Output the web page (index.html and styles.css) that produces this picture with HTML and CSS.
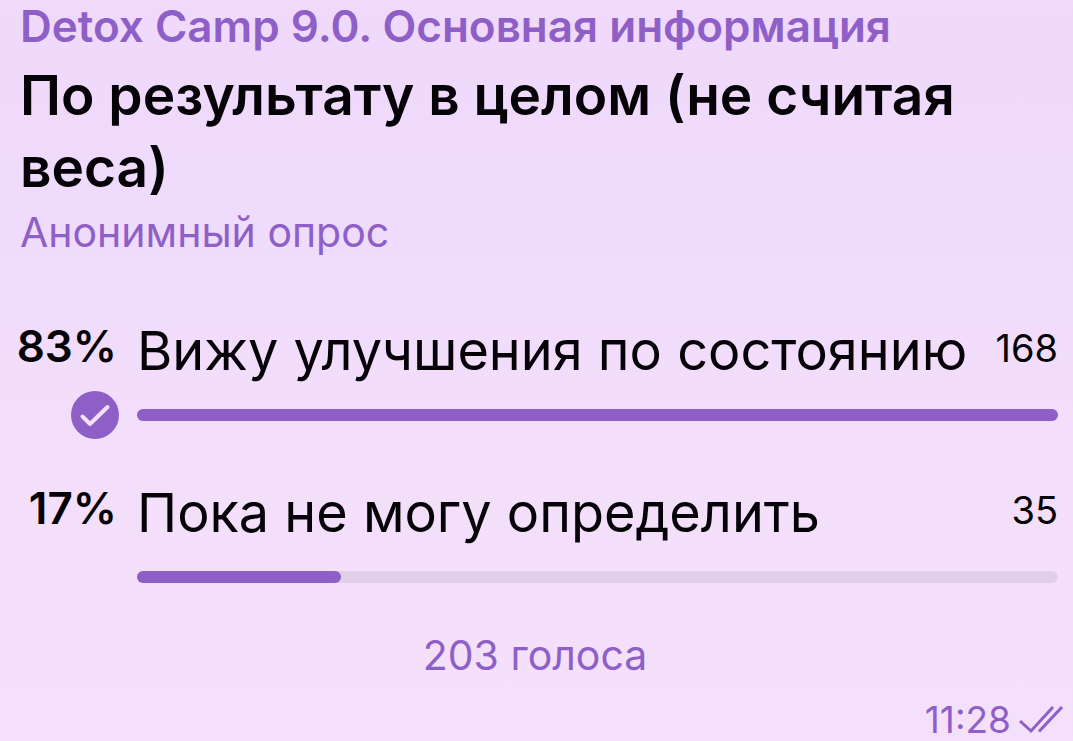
FILE: index.html
```
<!DOCTYPE html>
<html lang="ru">
<head>
  <meta charset="UTF-8">
  <meta name="viewport" content="width=device-width, initial-scale=1">
  <title>Опрос</title>
  <link rel="stylesheet" href="styles.css">
</head>
<body>
  <main class="poll">
    <header class="poll-header">
      <div class="poll-author">Detox Camp 9.0. Основная информация</div>
      <h1 class="poll-question">По результату в целом (не считая веса)</h1>
      <div class="poll-type">Анонимный опрос</div>
    </header>

    <ul class="options">
      <li class="option">
        <span class="percent">83%</span>
        <span class="option-text">Вижу улучшения по состоянию</span>
        <span class="count">168</span>
        <svg class="chosen" viewBox="0 0 48 48" aria-hidden="true">
          <circle cx="24" cy="24" r="24"/>
          <path d="M11.5 25.5l7.5 7.5 17.5-17"/>
        </svg>
        <div class="bar"><div class="bar-fill" style="width: 100%"></div></div>
      </li>
      <li class="option">
        <span class="percent">17%</span>
        <span class="option-text">Пока не могу определить</span>
        <span class="count">35</span>
        <div class="bar"><div class="bar-fill" style="width: 22.2%"></div></div>
      </li>
    </ul>

    <div class="total">203 голоса</div>
    <div class="meta">
      <time>11:28</time>
      <svg class="ticks" viewBox="0 0 44 28" aria-hidden="true">
        <path d="M1 15l11 10L34 1M20 25.5L43 1"/>
      </svg>
    </div>
  </main>
</body>
</html>
```

FILE: styles.css
```
:root {
  --accent: #8f5fc8;
  --text: #050208;
  --track: #e1cfe9;
}
* { box-sizing: border-box; }
body {
  margin: 0;
  min-height: 100vh;
  background: linear-gradient(#f0d9fb, #efdbfc 30%, #f3dffa 60%, #f4e0fb);
  color: var(--text);
  font-family: Inter, "Noto Sans", sans-serif;
}
.poll { padding: 1px 15px 0 16px; }

.poll-header { padding-left: 4px; }
.poll-author { color: var(--accent); font-size: 44px; line-height: 50px; font-weight: 600; }
.poll-question { margin: 8px 0 0; font-size: 55px; line-height: 72px; font-weight: 600; }
.poll-type { color: var(--accent); font-size: 41px; line-height: 58px; }

.options { list-style: none; margin: 50px 0 0; padding: 0; }
.option {
  display: grid;
  grid-template-columns: 103px 1fr auto;
  grid-template-rows: 80px 48px;
  column-gap: 18px;
  align-items: center;
}
.option + .option { margin-top: 34px; }
.percent { justify-self: end; padding: 0 2px 10px 0; font-size: 44px; font-weight: 600; }
.option-text { padding-bottom: 2px; font-size: 54px; white-space: nowrap; }
.count { padding-bottom: 6px; font-size: 38px; }
.chosen { grid-column: 1; justify-self: end; width: 48px; height: 48px; }
.chosen circle { fill: var(--accent); }
.chosen path { fill: none; stroke: #f5e0fc; stroke-width: 4; stroke-linecap: round; stroke-linejoin: round; }
.bar { grid-column: 2 / 4; height: 12px; border-radius: 6px; background: var(--track); }
.bar-fill { height: 100%; border-radius: 6px; background: var(--accent); }

.total { margin-top: 26px; padding-right: 4px; color: var(--accent); font-size: 41px; line-height: 56px; text-align: center; }
.meta {
  display: flex;
  justify-content: flex-end;
  align-items: center;
  gap: 8px;
  margin: 17px -5px 0 0;
  color: var(--accent);
  font-size: 37px;
  line-height: 40px;
}
.ticks { width: 44px; height: 28px; fill: none; stroke: var(--accent); stroke-width: 3; }
```
